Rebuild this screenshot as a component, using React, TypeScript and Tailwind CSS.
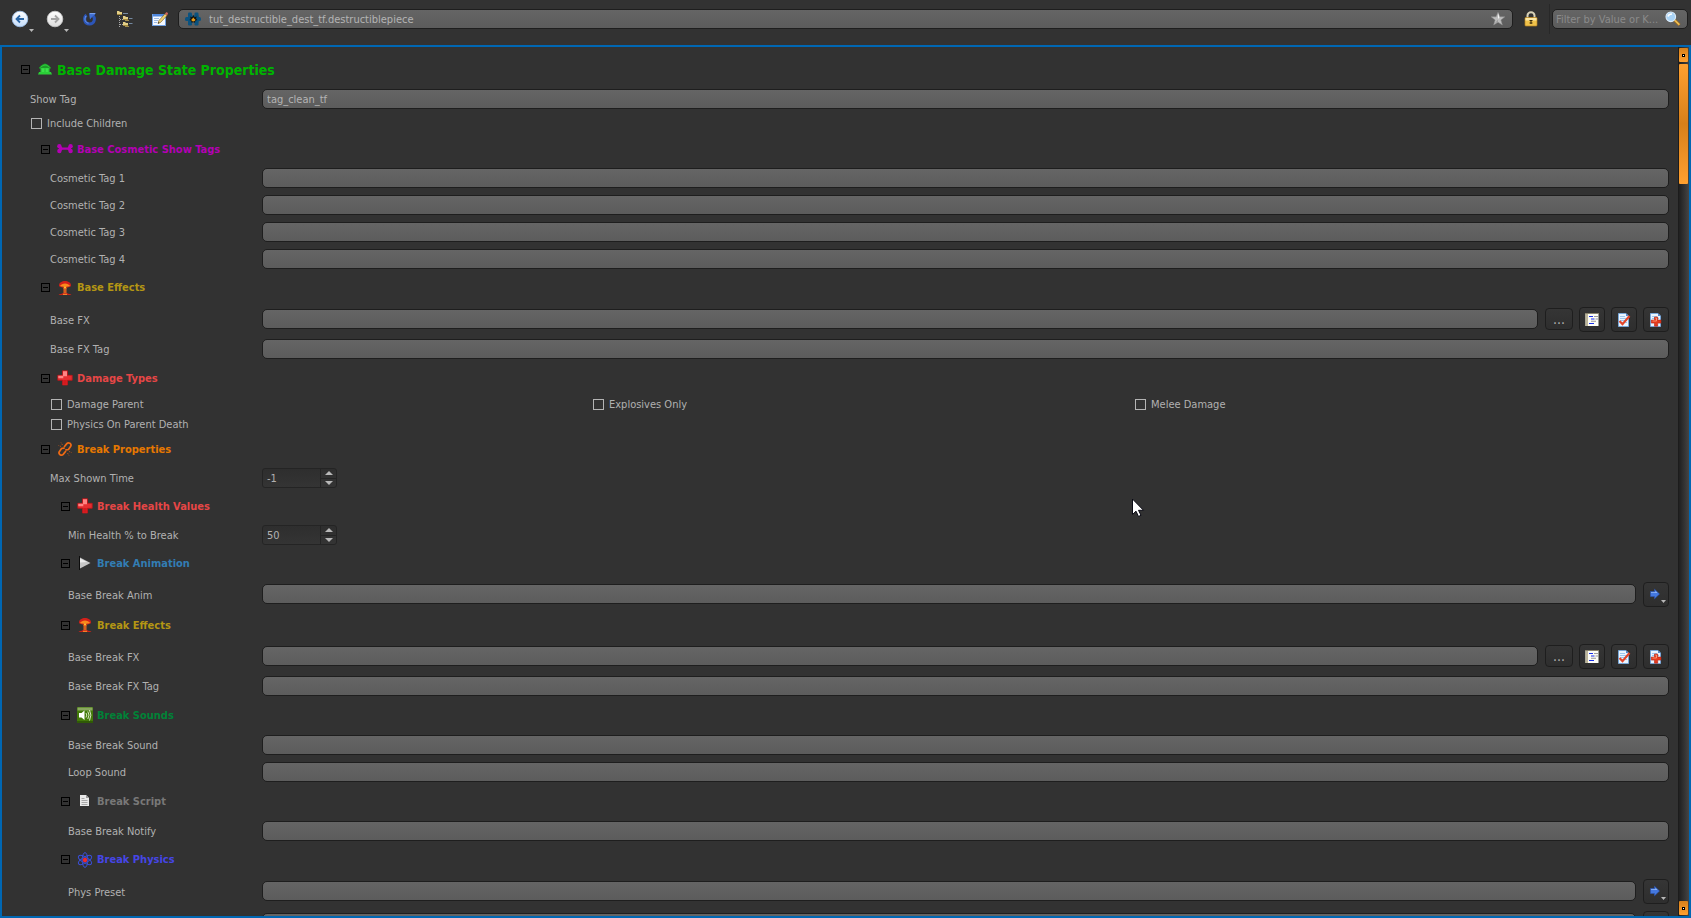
import React, { useId, useState } from "react";

const FIELD =
  "h-5 min-w-0 flex-1 rounded-[5px] border border-[#1e1e1e] bg-linear-to-b from-[#656565] to-[#5c5c5c] px-1 text-[11px] leading-4 text-[#b4b4b4] outline-none";
const TOOL = "rounded-[4px] border border-[#1e1e1e] bg-linear-to-b from-[#353535] to-[#2e2e2e] text-[#b1b1b1]";

/* ---------- toolbar icons ---------- */

function RoundArrowIcon({ back }: { back?: boolean }) {
  return (
    <svg width="18" height="18" viewBox="0 0 18 18" aria-hidden="true">
      <defs>
        <linearGradient id={back ? "rb" : "rf"} x1="0" y1="0" x2="0" y2="1">
          <stop offset="0" stopColor="#ffffff" />
          <stop offset="1" stopColor={back ? "#c3dcfb" : "#dcdcdc"} />
        </linearGradient>
      </defs>
      <circle cx="9" cy="9" r="7.8" fill={back ? "url(#rb)" : "url(#rf)"} stroke={back ? "#9cc0ec" : "#c9c9c9"} strokeWidth="0.8" />
      {back ? (
        <path d="M13 9H6M9 5.5 5.5 9 9 12.5" fill="none" stroke="#2a66a6" strokeWidth="1.800" />
      ) : (
        <path d="M5 9h7M9 5.5 12.500 9 9 12.500" fill="none" stroke="#a3a3a3" strokeWidth="1.800" />
      )}
    </svg>
  );
}

function RefreshIcon() {
  return (
    <svg width="16" height="16" viewBox="0 0 16 16" aria-hidden="true">
      <path d="M4.500 4C1.500 6.500 1.800 12.800 7.500 13c5.200 0 6.200-6 3.200-8.600" fill="none" stroke="#2c55b8" strokeWidth="3" />
      <path d="M4 5C2 8 3 11.500 6.500 12.200" fill="none" stroke="#6f9bea" strokeWidth="1" />
      <path d="M7 2h7l-1.500 2-1.800 1.200L8 8.500z" fill="#3f6fd2" />
      <path d="M8 2.600h5" stroke="#8fb2f4" strokeWidth="0.8" />
    </svg>
  );
}

function Folder({ x, y }: { x: number; y: number }) {
  return (
    <g>
      <path d={`M${x} ${y + 1}v-1h2l1 1h2v3h-5z`} fill="#e4cf86" />
      <path d={`M${x} ${y + 3.5}h5`} stroke="#a38a3c" strokeWidth="1" />
    </g>
  );
}

function TreeIcon() {
  return (
    <svg width="16" height="16" viewBox="0 0 16 16" aria-hidden="true">
      <Folder x={0} y={0} />
      <Folder x={6} y={5} />
      <Folder x={6} y={11} />
      <path d="M6 2.500h5M12 7.500h3.500M12 12.500h3.500" stroke="#7388a0" strokeWidth="1" />
      <path d="M8 9.500h4M8 15.500h4" stroke="#a08c50" strokeWidth="1" />
      <path d="M2.500 5v11M3 8.500h3M3 13.500h3" fill="none" stroke="#a9a9a9" strokeWidth="1" strokeDasharray="1 1" />
    </svg>
  );
}

function EditIcon() {
  return (
    <svg width="16" height="16" viewBox="0 0 16 16" aria-hidden="true">
      <rect x="0.500" y="3.500" width="13" height="11" fill="#f4f8ff" stroke="#6f9fe0" />
      <rect x="1" y="3" width="12" height="2.500" fill="#4d86dc" />
      <path d="M2 7.500h5M2 9.500h4M2 11.500h3" stroke="#9bb9e4" />
      <path d="m6 12.500.8-2.800L13 2.800l2 1.800-6.400 6.800z" fill="#f0cf72" stroke="#6d5722" strokeWidth="0.600" />
      <path d="m13 2.800 1-1.300c.8-.8 2.500.6 1.800 1.600L15 4.600z" fill="#d5665a" />
      <path d="m6 12.500.4-1.500 1.200 1z" fill="#222" />
    </svg>
  );
}

function PieceIcon() {
  return (
    <svg width="16" height="16" viewBox="0 0 16 16" aria-hidden="true">
      <g fill="#0b527f">
        <rect x="3" y="1.500" width="4" height="13" rx="1.200" />
        <rect x="9.500" y="1.500" width="4" height="13" rx="1.200" />
        <rect x="3" y="4.500" width="10.500" height="7" />
        <rect x="0" y="6" width="16" height="4" rx="1.500" />
      </g>
      <path d="m8.500 4 1 2.200 2.200-.8-.7 2.200 1.300 1.400-2 .8-.3 2-1.700-.8-1.700.8-.4-2-1.700-.8 1.200-1.400-.6-2.200 2 .8z" fill="#17130b" />
      <path d="m8.300 6.500 1 1.300 1.200.9-.8 1.300-1.400.5-1.400-.5-.6-1.300 1-.9z" fill="#e79a1c" />
    </svg>
  );
}

function StarIcon() {
  return (
    <svg width="16" height="16" viewBox="0 0 16 16" aria-hidden="true">
      <path d="m8 1.200 1.900 4.600h5l-4 3.200 1.500 5L8 11.200 3.600 14l1.500-5-4-3.200h5z" fill="#bdbdbd" stroke="#8b8b8b" strokeWidth="0.500" />
      <path d="m8 2 1.400 4.500L8 8z" fill="#f4f4f4" />
      <path d="M8 8.400v2.400L4.400 13z" fill="#9b9b9b" />
    </svg>
  );
}

function LockIcon() {
  return (
    <svg width="14" height="16" viewBox="0 0 14 16" aria-hidden="true">
      <path d="M3.500 8V4.500a3.500 3.200 0 0 1 7 0V8" fill="none" stroke="#d8d2b8" strokeWidth="2" />
      <rect x="1" y="6.500" width="12" height="8.500" rx="0.800" fill="#f0c24a" stroke="#b98421" strokeWidth="0.700" />
      <rect x="1.500" y="7" width="11" height="2.500" fill="#fbe7a4" />
      <path d="M5.500 9.500h3M7 9v4M5.500 12h3" stroke="#3c2c0c" strokeWidth="1.100" />
    </svg>
  );
}

function SearchIcon() {
  return (
    <svg width="16" height="16" viewBox="0 0 16 16" className="mb-px" aria-hidden="true">
      <path d="m9.500 9 5 5" stroke="#a8731d" strokeWidth="3" />
      <path d="m9.800 9.200 4.600 4.600" stroke="#f0c25c" strokeWidth="1.500" />
      <circle cx="5.800" cy="5.800" r="4.800" fill="#a9d3f6" stroke="#dcecfa" strokeWidth="1.100" />
      <path d="M3 5.500C3.500 3.500 5 3 7 3" fill="none" stroke="#fff" strokeWidth="1.600" />
    </svg>
  );
}

/* ---------- section icons ---------- */

function TempleIcon() {
  return (
    <svg width="16" height="16" viewBox="0 0 16 16" aria-hidden="true">
      <path d="M8 1.500C11 2.500 12.500 4 14 5.500v1H2v-1C3.500 4 5 2.500 8 1.500z" fill="#1c9c28" />
      <path d="M3.500 5.300C5 4 6.500 3.200 8 3s3 1 4.500 2.300" fill="none" stroke="#35dd42" strokeWidth="0.800" />
      <rect x="3.500" y="6" width="9" height="4.500" fill="#2fd03c" />
      <path d="M6 6.500v3.500M10 6.500v3.500" stroke="#4cf05a" />
      <path d="M2 10h12l1 2.500H1z" fill="#2bcf37" />
    </svg>
  );
}

function BoneIcon() {
  return (
    <svg width="16" height="16" viewBox="0 0 16 16" aria-hidden="true">
      <g fill="#b400b4">
        <circle cx="2.400" cy="5.300" r="2.200" />
        <circle cx="2.400" cy="10" r="2.200" />
        <circle cx="13.600" cy="5.300" r="2.200" />
        <circle cx="13.600" cy="10" r="2.200" />
        <path d="M2 5.500h2l1.500 1h5l1.500-1h2v4.500h-2l-1.500-1.200h-5L4 10H2z" />
      </g>
    </svg>
  );
}

function BlastIcon() {
  return (
    <svg width="16" height="16" viewBox="0 0 16 16" aria-hidden="true">
      <path d="M2 5.500C2 2.500 5 1 8 1s6 1.500 6 4.500C14 7 11 7.500 8 7.500S2 7 2 5.500z" fill="#d3201a" />
      <path d="M3 5.800C4 4.500 6 3.500 8 3.500s4 1 5 2.300C12 7 4 7 3 5.800z" fill="#f98a1c" />
      <path d="M5.500 6.500h5L9.300 9v4h-2.600V9z" fill="#ffc02c" />
      <path d="M6 6.500 7.200 9v4M10 6.500 8.800 9v4" fill="none" stroke="#c8321a" />
      <path d="M1.500 15c1-1.200 3-.8 4.500-2h4c1.500 1.200 3.500.8 4.500 2z" fill="#c92319" />
      <path d="M6 14.300h4" stroke="#ff9a2a" />
    </svg>
  );
}

function CrossIcon() {
  return (
    <svg width="16" height="16" viewBox="0 0 16 16" aria-hidden="true">
      <path d="M5.500.8h5v4.500h4.700v5h-4.700V15h-5v-4.700H.8v-5h4.700z" fill="#e52d31" stroke="#c01418" strokeWidth="0.800" />
      <path d="M6 1.300h4v5H6zM1.300 5.800h5v2.400h-5z" fill="#ff8484" />
      <path d="M6.200 10h3.600v4.500H6.200z" fill="#d3191e" />
    </svg>
  );
}

function BrokenLinkIcon() {
  return (
    <svg width="16" height="16" viewBox="0 0 16 16" aria-hidden="true">
      <g fill="none" stroke="#ee6a14" strokeWidth="1.700" strokeLinecap="round">
        <path d="M7.500 5.500 9.800 2.600c1.800-2 5.200.3 3.900 2.700L11.500 8.500 9 8.800" />
        <path d="M8.500 10.500 6.200 13.400c-1.800 2-5.200-.3-3.900-2.700L4.500 7.500 7 7.200" />
      </g>
      <path d="M4 5.500 1.500 4.500M5.500 4 4 1.500M12 10.500l2.500 1M10.500 12l1.500 2.500" stroke="#b9561a" strokeWidth="0.900" strokeDasharray="1.200 0.800" />
    </svg>
  );
}

function PlayIcon() {
  return (
    <svg width="16" height="16" viewBox="0 0 16 16" aria-hidden="true">
      <path d="M2.500 1v14" stroke="#0c0c0c" strokeWidth="1" />
      <path d="M3 2.500 13.500 8 3 13.500z" fill="#c6c6c6" />
      <path d="M3 3.500 10 7 3 7.500z" fill="#ececec" />
    </svg>
  );
}

function SoundIcon() {
  return (
    <svg width="16" height="16" viewBox="0 0 16 16" aria-hidden="true">
      <rect width="16" height="16" rx="1" fill="#437a0a" />
      <rect x="0.500" y="0.500" width="15" height="3" fill="#8aa860" />
      <rect x="0" y="14" width="16" height="2" fill="#2f5a06" />
      <path d="M2 6h2.500L7.500 3.500v9.500L4.500 10.500H2z" fill="#fff" />
      <path d="M9 6q1.500 2 0 4.500M10.800 4.500q2.400 3.500 0 7.500M12.500 3q2.800 5 0 10.500" fill="none" stroke="#e8f3d8" strokeWidth="0.900" />
    </svg>
  );
}

function ScriptIcon() {
  return (
    <svg width="16" height="16" viewBox="0 0 16 16" aria-hidden="true">
      <path d="M3 2h6l3 3v8H3z" fill="#e9e9e9" />
      <path d="M9 2v3h3z" fill="#9b9b9b" />
      <path d="M4.500 5.500h3M4.500 7.500h6M4.500 9.500h6M4.500 11.500h6" stroke="#a0a0a0" strokeWidth="0.900" />
    </svg>
  );
}

function AtomIcon() {
  return (
    <svg width="16" height="16" viewBox="0 0 16 16" aria-hidden="true">
      <g fill="none" stroke="#3a4fd6" strokeWidth="1">
        <ellipse cx="8" cy="8" rx="2.800" ry="7.400" />
        <ellipse cx="8" cy="8" rx="2.800" ry="7.400" transform="rotate(60 8 8)" />
        <ellipse cx="8" cy="8" rx="2.800" ry="7.400" transform="rotate(120 8 8)" />
      </g>
      <circle cx="8" cy="8" r="2.200" fill="#f02a2a" />
    </svg>
  );
}

/* ---------- field button icons ---------- */

function ListIcon() {
  return (
    <svg width="14" height="14" viewBox="0 0 14 14" aria-hidden="true">
      <rect x="0.500" y="0.500" width="13" height="12.500" fill="#fdfdf6" />
      <path d="M.5.500h2.500v12.500H.5z" fill="#bdb69b" />
      <path d="M0 .5h14" stroke="#8a856f" strokeWidth="1" />
      <path d="M4 3.500h4M6 6h3.500M4 10.500h5" stroke="#1a30e8" strokeWidth="1.200" />
      <path d="M9 3.500h4M10.500 6h2.500M6 8.300h5" stroke="#9a9a9a" strokeWidth="1.100" />
    </svg>
  );
}

function Page() {
  return (
    <>
      <path d="M1.500.5h7.500l2.500 2.500v10.500h-10z" fill="#eaf5ff" stroke="#76a9e0" strokeWidth="0.900" />
      <path d="M9 .5V3h2.500z" fill="#4d83c9" />
      <path d="M3 3.500h5M3 5.500h7M3 7.500h7M3 9.500h7" stroke="#9cc6ee" />
    </>
  );
}

function PageCheckIcon() {
  return (
    <svg width="14" height="14" viewBox="0 0 14 14" aria-hidden="true">
      <Page />
      <path d="m2.500 8 3 3.200L12.500 3" fill="none" stroke="#e2452a" strokeWidth="2.200" />
    </svg>
  );
}

function PagePlusIcon() {
  return (
    <svg width="14" height="14" viewBox="0 0 14 14" aria-hidden="true">
      <Page />
      <path d="M5.500 4h3.200v3.100H12v3H8.700v3.100H5.500v-3.100H2.300v-3h3.200z" fill="#e63b1e" stroke="#b32412" strokeWidth="0.600" />
      <path d="M6.300 5h1.200v3h-4" fill="none" stroke="#ff9a78" strokeWidth="0.900" />
    </svg>
  );
}

function GoIcon() {
  return (
    <svg width="12" height="12" viewBox="0 0 12 12" className="mr-[3px] mb-[2px]" aria-hidden="true">
      <path d="M1.500 3.500h4V1.200L10.500 6 5.500 10.800V8.500h-4z" fill="#4478e0" stroke="#2b55b4" strokeWidth="0.600" />
      <path d="M2 4.300h4.500V3L8.500 5H2z" fill="#94b9f8" />
    </svg>
  );
}

function Caret({ className }: { className: string }) {
  return (
    <svg width="5" height="3" viewBox="0 0 5 3" className={className} aria-hidden="true">
      <path d="M0 0h5L2.500 3z" fill="#b8b8b8" />
    </svg>
  );
}

/* ---------- building blocks ---------- */

function ToolbarButton({ label, menu, children }: { label: string; menu?: boolean; children: React.ReactNode }) {
  return (
    <button type="button" aria-label={label} className="relative flex h-8 w-[35px] items-center justify-center">
      {children}
      {menu && <Caret className="absolute right-[3px] bottom-[3px]" />}
    </button>
  );
}

type Extra = "files" | "go";

function FileButtons() {
  return (
    <div className="flex items-start gap-[6px]">
      <button type="button" aria-label="Browse" className={`${TOOL} mt-px flex h-[22px] w-7 items-center justify-center text-[14px]`}>
        ...
      </button>
      <button type="button" aria-label="Show list" className={`${TOOL} flex h-[25px] w-[26px] items-center justify-center`}>
        <ListIcon />
      </button>
      <button type="button" aria-label="Validate" className={`${TOOL} flex h-[25px] w-[26px] items-center justify-center`}>
        <PageCheckIcon />
      </button>
      <button type="button" aria-label="Add new" className={`${TOOL} flex h-[25px] w-[26px] items-center justify-center`}>
        <PagePlusIcon />
      </button>
    </div>
  );
}

const LABEL_INSET = ["pl-[30px]", "pl-[50px]", "pl-[68px]"];
const BOX_INSET = ["pl-[31px]", "pl-[51px]"];
const HEADER_INSET = ["pl-[21px]", "pl-[41px]", "pl-[61px]"];

function RowLabel({ id, level, text }: { id: string; level: number; text: string }) {
  return (
    <label htmlFor={id} className={`${LABEL_INSET[level]} w-[262px] shrink-0 pt-[2px] text-[11px] leading-4 whitespace-nowrap`}>
      {text}
    </label>
  );
}

function TextRow({ level, label, value = "", extra }: { level: number; label: string; value?: string; extra?: Extra }) {
  const id = useId();
  return (
    <div className="flex items-center pt-1 pb-[3px]">
      <RowLabel id={id} level={level} text={label} />
      <div className="flex min-w-0 flex-1 items-start gap-[7px]">
        <input id={id} type="text" defaultValue={value} className={`${FIELD} ${extra ? "mt-[2px]" : ""}`} />
        {extra === "files" && <FileButtons />}
        {extra === "go" && (
          <button type="button" aria-label={`Go to ${label}`} className={`${TOOL} relative flex h-[25px] w-[26px] items-center justify-center`}>
            <GoIcon />
            <Caret className="absolute right-[2px] bottom-[3px]" />
          </button>
        )}
      </div>
    </div>
  );
}

function SpinRow({ level, label, initial }: { level: number; label: string; initial: number }) {
  const id = useId();
  const [value, setValue] = useState(initial);
  return (
    <div className="flex items-center pt-1 pb-[3px]">
      <RowLabel id={id} level={level} text={label} />
      <div className="flex h-5 w-[75px] overflow-hidden rounded-[3px] border border-[#242424] bg-linear-to-b from-[#2e2e2e] to-[#343434]">
        <input
          id={id}
          type="text"
          inputMode="numeric"
          value={value}
          onChange={(e) => setValue(Number(e.target.value) || 0)}
          className="min-w-0 flex-1 bg-transparent pt-[2px] pl-1 text-[11px] leading-4 text-[#b1b1b1] outline-none"
        />
        <div className="flex w-4 flex-col border-l border-[#242424]">
          <button type="button" aria-label="Increase" onClick={() => setValue(value + 1)} className="flex flex-1 items-center justify-center border-b border-[#242424]">
            <svg width="8" height="4" viewBox="0 0 8 4" aria-hidden="true">
              <path d="M0 4h8L4 0z" fill="#b8b8b8" />
            </svg>
          </button>
          <button type="button" aria-label="Decrease" onClick={() => setValue(value - 1)} className="flex flex-1 items-center justify-center">
            <svg width="8" height="4" viewBox="0 0 8 4" aria-hidden="true">
              <path d="M0 0h8L4 4z" fill="#b8b8b8" />
            </svg>
          </button>
        </div>
      </div>
    </div>
  );
}

function CheckBox({ label }: { label: string }) {
  return (
    <label className="flex h-5 items-center gap-[5px] text-[11px] leading-4">
      <input type="checkbox" className="size-[11px] shrink-0 appearance-none border border-[#b4b4b4] checked:bg-[#b4b4b4]" />
      <span className="pt-px">{label}</span>
    </label>
  );
}

interface SectionProps {
  level: number;
  title: string;
  icon: React.ReactNode;
  color: string;
  height?: string;
  children: React.ReactNode;
}

function Section({ level, title, icon, color, height = "h-[30px]", children }: SectionProps) {
  const [open, setOpen] = useState(true);
  return (
    <section>
      <h2 className={`${HEADER_INSET[level]} ${height} flex items-center`}>
        <button type="button" aria-expanded={open} onClick={() => setOpen(!open)} className="flex items-center">
          <svg width="9" height="9" viewBox="0 0 9 9" aria-hidden="true">
            <rect x="0.500" y="0.500" width="8" height="8" fill="none" stroke="#000" />
            <path d={open ? "M2 4.500h5" : "M2 4.500h5M4.500 2v5"} stroke="#000" />
          </svg>
          <span className="ml-[7px] w-5">{icon}</span>
          <span className={`${color} ${level === 0 ? "text-[14px] leading-5" : "text-[11px] leading-4"} pt-px font-bold whitespace-nowrap`}>
            {title}
          </span>
        </button>
      </h2>
      {open && children}
    </section>
  );
}

function ScrollCap() {
  return (
    <button type="button" aria-label="Scroll" className="flex h-[14px] w-[9px] shrink-0 items-center justify-center rounded-[1px] bg-linear-to-b from-[#d7801a] to-[#ffa02f]">
      <span className="size-[3px] border border-black bg-white" />
    </button>
  );
}

export default function App() {
  return (
    <div className="relative flex h-screen flex-col overflow-hidden bg-[#323232] font-['Tahoma','DejaVu_Sans_Condensed','DejaVu_Sans',sans-serif] text-[#b1b1b1]">
      <header className="flex h-[45px] shrink-0 items-start pr-[3px] pl-[2px]">
        <nav className="mr-px flex pt-[3px]">
          <ToolbarButton label="Back" menu>
            <RoundArrowIcon back />
          </ToolbarButton>
          <ToolbarButton label="Forward" menu>
            <RoundArrowIcon />
          </ToolbarButton>
          <ToolbarButton label="Refresh">
            <RefreshIcon />
          </ToolbarButton>
          <ToolbarButton label="Tree">
            <TreeIcon />
          </ToolbarButton>
          <ToolbarButton label="Edit">
            <EditIcon />
          </ToolbarButton>
        </nav>
        <div className="mt-[9px] flex h-5 min-w-0 flex-1 items-center rounded-[5px] border border-[#1e1e1e] bg-linear-to-b from-[#656565] to-[#5c5c5c] px-[6px]">
          <PieceIcon />
          <input
            aria-label="Asset"
            defaultValue="tut_destructible_dest_tf.destructiblepiece"
            className="min-w-0 flex-1 bg-transparent pt-[2px] pl-2 text-[11px] leading-4 text-[#b4b4b4] outline-none"
          />
          <button type="button" aria-label="Favourite">
            <StarIcon />
          </button>
        </div>
        <button type="button" aria-label="Lock" className="flex h-[37px] w-9 items-center justify-center">
          <LockIcon />
        </button>
        <div className="mt-1 mr-[2px] h-[30px] w-px bg-[#282828]" />
        <div className="mt-[9px] flex h-5 w-[136px] items-center rounded-[5px] border border-[#1e1e1e] bg-linear-to-b from-[#656565] to-[#5c5c5c] pr-[6px] pl-[3px]">
          <input
            aria-label="Filter"
            placeholder="Filter by Value or K..."
            className="min-w-0 flex-1 bg-transparent pt-[2px] text-[11px] leading-4 outline-none placeholder:text-[#8b8b8b]"
          />
          <SearchIcon />
        </div>
      </header>

      <main className="flex min-h-0 flex-1 border-2 border-[#0067b3]">
        <div className="-ml-[2px] min-w-0 flex-1 overflow-hidden pt-[7px] pr-[9px]">
          <Section level={0} title="Base Damage State Properties" icon={<TempleIcon />} color="text-[#00b400]" height="h-[31px]">
            <TextRow level={0} label="Show Tag" value="tag_clean_tf" />
            <div className={`${BOX_INSET[0]} pt-px pb-px`}>
              <CheckBox label="Include Children" />
            </div>

            <Section level={1} title="Base Cosmetic Show Tags" icon={<BoneIcon />} color="text-[#b400b4]">
              <TextRow level={1} label="Cosmetic Tag 1" />
              <TextRow level={1} label="Cosmetic Tag 2" />
              <TextRow level={1} label="Cosmetic Tag 3" />
              <TextRow level={1} label="Cosmetic Tag 4" />
            </Section>

            <Section level={1} title="Base Effects" icon={<BlastIcon />} color="text-[#b49614]" height="h-[31px]">
              <TextRow level={1} label="Base FX" extra="files" />
              <TextRow level={1} label="Base FX Tag" />
            </Section>

            <Section level={1} title="Damage Types" icon={<CrossIcon />} color="text-[#e64646]" height="h-8">
              <div className={`${BOX_INSET[1]} grid grid-cols-3 gap-x-2`}>
                <CheckBox label="Damage Parent" />
                <CheckBox label="Explosives Only" />
                <CheckBox label="Melee Damage" />
                <CheckBox label="Physics On Parent Death" />
              </div>
            </Section>

            <Section level={1} title="Break Properties" icon={<BrokenLinkIcon />} color="text-[#e67800]">
              <SpinRow level={1} label="Max Shown Time" initial={-1} />

              <Section level={2} title="Break Health Values" icon={<CrossIcon />} color="text-[#e64646]">
                <SpinRow level={2} label="Min Health % to Break" initial={50} />
              </Section>

              <Section level={2} title="Break Animation" icon={<PlayIcon />} color="text-[#327db4]">
                <TextRow level={2} label="Base Break Anim" extra="go" />
              </Section>

              <Section level={2} title="Break Effects" icon={<BlastIcon />} color="text-[#b49614]">
                <TextRow level={2} label="Base Break FX" extra="files" />
                <TextRow level={2} label="Base Break FX Tag" />
              </Section>

              <Section level={2} title="Break Sounds" icon={<SoundIcon />} color="text-[#008237]" height="h-8">
                <TextRow level={2} label="Base Break Sound" />
                <TextRow level={2} label="Loop Sound" />
              </Section>

              <Section level={2} title="Break Script" icon={<ScriptIcon />} color="text-[#787878]" height="h-8">
                <TextRow level={2} label="Base Break Notify" />
              </Section>

              <Section level={2} title="Break Physics" icon={<AtomIcon />} color="text-[#4646e6]" height="h-[31px]">
                <TextRow level={2} label="Phys Preset" extra="go" />
                <TextRow level={2} label="" extra="go" />
              </Section>
            </Section>
          </Section>
        </div>

        <div className="flex w-[11px] shrink-0 flex-col items-center border-l border-[#1c1c1c] bg-linear-to-r from-[#202020] to-[#454545] pt-px pr-px pb-px">
          <ScrollCap />
          <div className="mt-[2px] h-[120px] w-[9px] rounded-[1px] bg-linear-to-b from-[#ffa02f] via-[#d7801a] to-[#ffa02f]" />
          <div className="flex-1" />
          <ScrollCap />
        </div>
      </main>

      <svg width="13" height="20" viewBox="0 0 13 20" className="pointer-events-none absolute top-[498px] left-[1132px]" aria-hidden="true">
        <path d="M.5 1v15.500l3.500-3.300 2.500 5.300 2.500-1.200-2.500-5h5z" fill="#fff" stroke="#0a0a14" />
      </svg>
    </div>
  );
}
